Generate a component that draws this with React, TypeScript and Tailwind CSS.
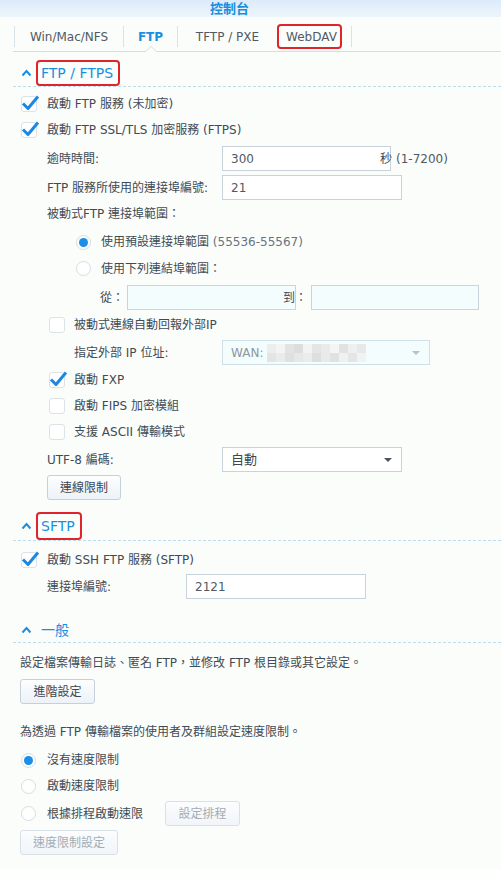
const font = "font-['DejaVu_Sans','Noto_Sans_CJK_TC',sans-serif]";

const Check = ({ on }: { on?: boolean }) => (
  <span className="relative w-[16px] h-[16px] shrink-0 rounded-[3px] border border-[#dbe3e9] bg-white">
    {on && (
      <svg className="absolute -left-[2px] -top-[3px]" width="20" height="17" viewBox="0 0 20 17">
        <path d="M3 9.5 L8 14.5 L18 2.5" stroke="#1d87e4" strokeWidth="3" fill="none" strokeLinejoin="round" />
      </svg>
    )}
  </span>
);

const Radio = ({ on }: { on?: boolean }) => (
  <span className="w-[15px] h-[15px] shrink-0 rounded-full border border-[#d5dde4] bg-white flex items-center justify-center">
    {on && <span className="w-[9px] h-[9px] rounded-full bg-[#1a8ee8]" />}
  </span>
);

const Chevron = () => (
  <svg className="ml-[8px] shrink-0" width="11" height="8" viewBox="0 0 11 8">
    <path d="M1.5 6.5 L5.5 2 L9.5 6.5" stroke="#1a8fe0" strokeWidth="2" fill="none" />
  </svg>
);

const SectionHead = ({ title, boxH, outer, red }: { title: string; boxH: string; outer: string; red?: boolean }) => (
  <div className={`ml-[13px] flex items-end border-b border-dashed border-[#bcdcf0] ${outer}`}>
    <div className={`flex items-center ${boxH}`}>
      <Chevron />
      {red ? (
        <span className="ml-[4px] h-full flex items-center border-2 border-[#e0242b] rounded-[4px] pl-[3px] pr-[5px] text-[14px] text-[#1a8fe0]">
          {title}
        </span>
      ) : (
        <span className="ml-[9px] text-[14px] text-[#1a8fe0]">{title}</span>
      )}
    </div>
  </div>
);

const Btn = ({ label, w, off }: { label: string; w: string; off?: boolean }) => (
  <div
    className={`h-[25px] ${w} rounded-[3px] border flex items-center justify-center bg-linear-to-b ${
      off
        ? "border-[#d9e1e8] from-[#fbfdfe] to-[#f1f5f9] text-[#a3acb5]"
        : "border-[#c6d0d9] from-[#fdfeff] to-[#ecf2f8] text-[#3c4650]"
    }`}
  >
    {label}
  </div>
);

const mosaic = [
  "bg-[#eceeee]", "bg-[#f3f5f5]", "bg-[#e2e4e4]", "bg-[#dcdede]", "bg-[#f2f4f4]", "bg-[#e4e6e6]",
  "bg-[#e9ebeb]", "bg-[#f4f6f6]", "bg-[#e1e3e3]", "bg-[#eef0f0]", "bg-[#e7e9e9]",
  "bg-[#e3e5e5]", "bg-[#eaecec]", "bg-[#dfe1e1]", "bg-[#e6e8e8]", "bg-[#ebeded]", "bg-[#dddfdf]",
  "bg-[#e8eaea]", "bg-[#e0e2e2]", "bg-[#eff1f1]", "bg-[#e4e6e6]", "bg-[#f1f3f3]",
];

export default function App() {
  return (
    <div className={`w-[501px] h-[869px] overflow-hidden bg-[#fbfdfb] text-[12px] text-[#414b55] [text-spacing-trim:space-all] ${font}`}>
      <div className="h-[17px] bg-linear-to-b from-[#dcebfa] to-[#edf5fb] flex items-center">
        <span className="ml-[210px] text-[13px] font-bold text-[#1a8fe0]">控制台</span>
      </div>

      <div className="ml-[13px] h-[35px] border-b border-[#d6dee2] flex items-end pb-[4px] pl-[1px] text-[#505a64]">
        <div className="w-[109px] h-[21px] border-l border-[#d7e3eb] flex items-center justify-center">Win/Mac/NFS</div>
        <div className="relative w-[54px] h-[21px] border-l border-[#d7e3eb] flex items-center justify-center font-bold text-[#1a8fe0]">
          FTP
          <svg className="absolute left-[21px] -bottom-[5px]" width="12" height="6" viewBox="0 0 12 6">
            <path d="M0 6 L6 0.5 L12 6" stroke="#d6dee2" fill="#fbfdfb" />
          </svg>
        </div>
        <div className="w-[100px] h-[21px] border-l border-[#d7e3eb] flex items-center justify-center">TFTP / PXE</div>
        <div className="w-[75px] h-[21px] border-l border-r border-[#d7e3eb] flex items-center">
          <span className="-ml-[1px] h-[25px] flex items-center border-2 border-[#e0242b] rounded-[4px] pl-[7px] pr-[3px]">WebDAV</span>
        </div>
      </div>

      <SectionHead title="FTP / FTPS" outer="h-[35px]" boxH="h-[26px]" red />

      <div className="mt-[4px] h-[26px] ml-[21px] flex items-center gap-[10px]">
        <Check on />
        <span>啟動 FTP 服務 (未加密)</span>
      </div>
      <div className="h-[26px] ml-[21px] flex items-center gap-[10px]">
        <Check on />
        <span>啟動 FTP SSL/TLS 加密服務 (FTPS)</span>
      </div>
      <div className="mt-[3px] h-[25px] ml-[47px] flex items-center">
        <span className="w-[175px]">逾時時間:</span>
        <div className="w-[169px] h-[25px] border border-[#c8d3dc] bg-white flex items-center pl-[8px] text-[#505a64]">300</div>
        <span className="-ml-[11px]">秒</span>
        <span className="ml-[4px] text-[#505a64]">(1-7200)</span>
      </div>
      <div className="mt-[4px] h-[25px] ml-[47px] flex items-center">
        <span className="w-[175px]">FTP 服務所使用的連接埠編號:</span>
        <div className="w-[180px] h-[25px] border border-[#c8d3dc] bg-white flex items-center pl-[8px] text-[#505a64]">21</div>
      </div>
      <div className="mt-[1px] h-[26px] ml-[47px] flex items-center">被動式FTP 連接埠範圍：</div>
      <div className="mt-[2px] h-[26px] ml-[76px] flex items-center gap-[10px]">
        <Radio on />
        <span>
          使用預設連接埠範圍 <span className="text-[#6a737c]">(55536-55567)</span>
        </span>
      </div>
      <div className="h-[27px] ml-[76px] flex items-center gap-[10px]">
        <Radio />
        <span>使用下列連結埠範圍：</span>
      </div>
      <div className="mt-[3px] h-[25px] ml-[100px] flex items-center">
        <span className="w-[27px]">從：</span>
        <div className="w-[169px] h-[25px] border border-[#c9d5dc] bg-[#f4fdfe]" />
        <span className="-ml-[13px]">到：</span>
        <div className="ml-[4px] w-[168px] h-[25px] border border-[#c9d5dc] bg-[#f4fdfe]" />
      </div>
      <div className="mt-[2px] h-[26px] ml-[49px] flex items-center gap-[9px]">
        <Check />
        <span>被動式連線自動回報外部IP</span>
      </div>
      <div className="mt-[2px] h-[25px] ml-[74px] flex items-center">
        <span className="w-[148px]">指定外部 IP 位址:</span>
        <div className="w-[208px] h-[25px] border border-[#cfdfe7] bg-[#f4fdfe] flex items-center justify-between pl-[8px] pr-[9px]">
          <div className="flex items-center">
            <span className="text-[#8e969c]">WAN:</span>
            <div className="ml-[4px] grid grid-cols-11 w-[99px] h-[18px]">
              {mosaic.map((c, i) => (
                <div key={i} className={c} />
              ))}
            </div>
          </div>
          <svg width="8" height="4" viewBox="0 0 8 4">
            <path d="M0 0 L8 0 L4 4 Z" fill="#b9bfc5" />
          </svg>
        </div>
      </div>
      <div className="mt-[2px] h-[26px] ml-[49px] flex items-center gap-[9px]">
        <Check on />
        <span>啟動 FXP</span>
      </div>
      <div className="h-[26px] ml-[49px] flex items-center gap-[9px]">
        <Check />
        <span>啟動 FIPS 加密模組</span>
      </div>
      <div className="h-[26px] ml-[49px] flex items-center gap-[9px]">
        <Check />
        <span>支援 ASCII 傳輸模式</span>
      </div>
      <div className="mt-[2px] h-[25px] ml-[47px] flex items-center">
        <span className="w-[175px]">UTF-8 編碼:</span>
        <div className="w-[180px] h-[25px] border border-[#c8d3dc] bg-white flex items-center justify-between pl-[8px] pr-[9px] text-[13px] text-[#3c4650]">
          自動
          <svg width="8" height="4" viewBox="0 0 8 4">
            <path d="M0 0 L8 0 L4 4 Z" fill="#4a5560" />
          </svg>
        </div>
      </div>
      <div className="mt-[3px] ml-[47px]">
        <Btn label="連線限制" w="w-[74px]" />
      </div>

      <SectionHead title="SFTP" outer="h-[41px]" boxH="h-[28px]" red />

      <div className="mt-[6px] h-[26px] ml-[21px] flex items-center gap-[10px]">
        <Check on />
        <span>啟動 SSH FTP 服務 (SFTP)</span>
      </div>
      <div className="mt-[1px] h-[25px] ml-[47px] flex items-center">
        <span className="w-[139px]">連接埠編號:</span>
        <div className="w-[180px] h-[25px] border border-[#c8d3dc] bg-white flex items-center pl-[8px] text-[#505a64]">2121</div>
      </div>

      <SectionHead title="一般" outer="h-[44px]" boxH="h-[24px]" />

      <div className="mt-[7px] h-[26px] ml-[20px] flex items-center whitespace-pre">
        設定檔案傳輸日誌、匿名 FTP，並修改 FTP 根目錄或其它設定。
      </div>
      <div className="mt-[3px] ml-[20px]">
        <Btn label="進階設定" w="w-[75px]" />
      </div>
      <div className="mt-[15px] h-[26px] ml-[20px] flex items-center whitespace-pre">
        為透過 FTP 傳輸檔案的使用者及群組設定速度限制。
      </div>
      <div className="mt-[2px] h-[26px] ml-[21px] flex items-center gap-[11px]">
        <Radio on />
        <span>沒有速度限制</span>
      </div>
      <div className="h-[26px] ml-[21px] flex items-center gap-[11px]">
        <Radio />
        <span>啟動速度限制</span>
      </div>
      <div className="mt-[2px] h-[25px] ml-[21px] flex items-center">
        <Radio />
        <span className="ml-[11px] w-[118px]">根據排程啟動速限</span>
        <Btn label="設定排程" w="w-[75px]" off />
      </div>
      <div className="mt-[4px] ml-[20px]">
        <Btn label="速度限制設定" w="w-[98px]" off />
      </div>
    </div>
  );
}
